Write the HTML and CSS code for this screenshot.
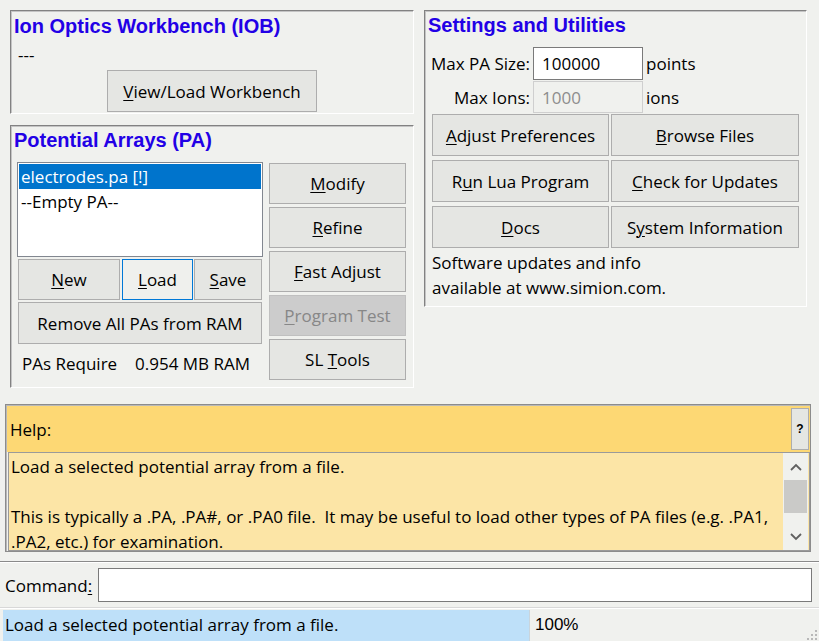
FILE: index.html
```html
<!DOCTYPE html>
<html>
<head>
<meta charset="utf-8">
<title>SIMION</title>
<link rel="stylesheet" href="styles.css">
</head>
<body>
<div class="app">
  <div class="top">
    <div class="left-col">
      <section class="panel iob">
        <h2 class="title">Ion Optics Workbench (IOB)</h2>
        <div class="iob-status">---</div>
        <div class="iob-actions"><button class="btn btn-wb"><span><u>V</u>iew/Load Workbench</span></button></div>
      </section>
      <section class="panel pa">
        <h2 class="title">Potential Arrays (PA)</h2>
        <div class="pa-body">
          <div class="pa-main">
            <ul class="listbox">
              <li class="sel">electrodes.pa [!]</li>
              <li>--Empty PA--</li>
            </ul>
            <div class="pa-row">
              <button class="btn b-new"><span><u>N</u>ew</span></button>
              <button class="btn b-load"><span><u>L</u>oad</span></button>
              <button class="btn b-save"><span><u>S</u>ave</span></button>
            </div>
            <button class="btn b-remove"><span>Remove All PAs from RAM</span></button>
            <div class="pa-req"><span class="req-label">PAs Require</span><span>0.954 MB RAM</span></div>
          </div>
          <div class="pa-side">
            <button class="btn side-btn"><span><u>M</u>odify</span></button>
            <button class="btn side-btn"><span><u>R</u>efine</span></button>
            <button class="btn side-btn"><span><u>F</u>ast Adjust</span></button>
            <button class="btn side-btn disabled"><span><u>P</u>rogram Test</span></button>
            <button class="btn side-btn"><span>SL <u>T</u>ools</span></button>
          </div>
        </div>
      </section>
    </div>
    <section class="panel settings">
      <h2 class="title">Settings and Utilities</h2>
      <div class="form">
        <label class="flabel">Max PA Size:</label>
        <div class="field">100000</div>
        <span class="unit">points</span>
        <label class="flabel">Max Ions:</label>
        <div class="field field-off">1000</div>
        <span class="unit">ions</span>
      </div>
      <div class="util-grid">
        <button class="btn"><span><u>A</u>djust Preferences</span></button>
        <button class="btn"><span><u>B</u>rowse Files</span></button>
        <button class="btn"><span>R<u>u</u>n Lua Program</span></button>
        <button class="btn"><span><u>C</u>heck for Updates</span></button>
        <button class="btn"><span><u>D</u>ocs</span></button>
        <button class="btn"><span>S<u>y</u>stem Information</span></button>
      </div>
      <div class="info">Software updates and info<br>available at www.simion.com.</div>
    </section>
  </div>

  <section class="help">
    <div class="help-head">
      <span class="help-label">Help:</span>
      <button class="qbtn">?</button>
    </div>
    <div class="help-body">
      <div class="help-text">
        <p>Load a selected potential array from a file.</p>
        <p class="gap">This is typically a .PA, .PA#, or .PA0 file.&nbsp; It may be useful to load other types of PA files (e.g. .PA1, .PA2, etc.) for examination.</p>
      </div>
      <div class="scrollbar">
        <div class="sb-arrow">
          <svg width="12" height="8" viewBox="0 0 12 8"><path d="M1 7 L6 2 L11 7" fill="none" stroke="#606060" stroke-width="1.8"/></svg>
        </div>
        <div class="sb-track"><div class="sb-thumb"></div></div>
        <div class="sb-arrow">
          <svg width="12" height="8" viewBox="0 0 12 8"><path d="M1 1 L6 6 L11 1" fill="none" stroke="#606060" stroke-width="1.8"/></svg>
        </div>
      </div>
    </div>
  </section>

  <div class="sep"></div>

  <div class="cmd">
    <label class="cmd-label">Command<u>:</u></label>
    <div class="cmd-input"></div>
  </div>

  <div class="sep2"></div>

  <div class="status">
    <div class="status-msg">Load a selected potential array from a file.</div>
    <div class="status-pct">100%</div>
    <svg class="grip" width="12" height="12" viewBox="0 0 12 12">
      <rect x="9" y="1" width="2" height="2" fill="#b8b8b8"/>
      <rect x="5" y="5" width="2" height="2" fill="#b8b8b8"/>
      <rect x="9" y="5" width="2" height="2" fill="#b8b8b8"/>
      <rect x="1" y="9" width="2" height="2" fill="#b8b8b8"/>
      <rect x="5" y="9" width="2" height="2" fill="#b8b8b8"/>
      <rect x="9" y="9" width="2" height="2" fill="#b8b8b8"/>
    </svg>
  </div>
</div>
</body>
</html>
```

FILE: styles.css
```css
* { box-sizing: border-box; }
html, body { margin: 0; padding: 0; }
body {
  width: 819px;
  height: 641px;
  overflow: hidden;
  background: #f0f1ee;
  font-family: "Open Sans", "Noto Sans", sans-serif;
  font-size: 17px;
  color: #000;
}
u { text-decoration-thickness: 1px; text-underline-offset: 2px; }

.app { display: flex; flex-direction: column; width: 819px; height: 641px; }

.top { display: flex; gap: 10px; padding: 10px 0 0 10px; align-items: flex-start; }
.left-col { display: flex; flex-direction: column; gap: 11px; width: 404px; }

.panel {
  border: 1px solid;
  border-color: #828282 #ffffff #ffffff #828282;
  box-shadow: inset 1px 1px 0 #c4c4c4;
  padding: 3px 3px 0;
}
.title {
  margin: 0;
  padding-top: 1px;
  font: bold 20px/22px "Liberation Sans", Arial, sans-serif;
  color: #2200e6;
  white-space: nowrap;
}

.btn {
  font: inherit;
  font-size: 17px;
  line-height: 22px;
  color: #000;
  background: #e5e6e3;
  border: 1px solid #adadad;
  margin: 0;
  padding: 1px 0 0;
  display: flex;
  align-items: center;
  justify-content: center;
  white-space: nowrap;
}

/* IOB */
.iob { height: 104px; padding-top: 3px; }
.iob-status { margin: 6px 0 0 4px; line-height: 24px; }
.iob-actions { display: flex; justify-content: center; margin-top: 3px; }
.btn-wb { width: 210px; height: 42px; }

/* PA */
.pa { height: 263px; padding-top: 2px; }
.pa-body { display: flex; gap: 6px; margin-top: 11px; padding-left: 3px; }
.pa-main { width: 246px; display: flex; flex-direction: column; }
.listbox {
  list-style: none;
  margin: 0;
  padding: 1px;
  height: 95px;
  background: #fff;
  border: 1px solid #828790;
}
.listbox li { height: 25px; line-height: 25px; padding-left: 2px; }
.listbox li.sel { background: #0074cc; color: #fff; }
.pa-row { display: flex; margin: 2px 0 0 1px; }
.b-new { width: 102px; height: 41px; }
.b-load { width: 71px; height: 41px; margin-left: 2px; background: #eff0ed; border-color: #0078d7; }
.b-save { width: 68px; height: 41px; margin-left: 1px; }
.b-remove { width: 244px; height: 42px; margin: 2px 0 0 1px; }
.pa-req { margin-top: 7px; padding-left: 5px; line-height: 25px; display: flex; }
.req-label { width: 113px; }
.pa-side { width: 137px; display: flex; flex-direction: column; gap: 3px; margin-top: 1px; }
.side-btn { height: 41px; }
.btn.disabled { background: #cccccc; border-color: #c0c0c0; color: #878787; }

/* Settings */
.settings { width: 383px; height: 297px; padding-top: 2px; }
.form {
  display: grid;
  grid-template-columns: 102px 110px auto;
  grid-template-rows: 33px 32px;
  column-gap: 3px;
  row-gap: 1px;
  margin-top: 11px;
}
.flabel { align-self: center; text-align: right; white-space: nowrap; }
.unit { align-self: center; }
.field {
  border: 1px solid #7a7a7a;
  background: #fff;
  padding-left: 8px;
  display: flex;
  align-items: center;
}
.field-off { border-color: #cfcfcf; background: #f0f1ee; color: #8d8d8d; }
.util-grid {
  display: grid;
  grid-template-columns: 177px 188px;
  grid-auto-rows: 42px;
  gap: 4px 2px;
  margin: 1px 0 0 4px;
}
.info { margin-top: 2px; padding-left: 4px; line-height: 25px; }

/* Help */
.help {
  margin: 16px 0 0 5px;
  width: 806px;
  height: 148px;
  border: 1px solid #8c8c8c;
  box-shadow: inset 1px 1px 0 #b8b8b8;
  display: flex;
  flex-direction: column;
  padding: 1px 0 0 1px;
}
.help-head {
  height: 46px;
  background: #fdd874;
  display: flex;
  align-items: center;
  justify-content: space-between;
  padding-left: 3px;
}
.qbtn {
  width: 18px;
  height: 42px;
  padding: 0;
  margin: 0 1px 0 0;
  background: #e5e6e3;
  border: 1px solid #adadad;
  font: bold 12px "Liberation Sans", Arial, sans-serif;
  color: #000;
}
.help-body {
  flex: 1;
  margin-left: 1px;
  border: 1px solid #9a9a9a;
  background: #fce5a6;
  display: flex;
  overflow: hidden;
  padding-right: 1px;
}
.help-text { flex: 1; padding: 1px 0 0 2px; line-height: 25px; overflow: hidden; }
.help-text p { margin: 0; }
.help-text p.gap { margin-top: 25px; }
.scrollbar { width: 25px; background: #f0f1ee; display: flex; flex-direction: column; }
.sb-arrow { height: 27px; display: flex; align-items: center; justify-content: center; }
.sb-track { flex: 1; }
.sb-thumb { height: 33px; background: #cacac8; margin: 0 1px; }

/* Command */
.sep { margin-top: 9px; height: 2px; border-top: 1px solid #8a8a8a; border-bottom: 1px solid #ffffff; }
.cmd { display: flex; align-items: center; margin-top: 5px; height: 34px; }
.cmd-label { width: 98px; padding-left: 5px; }
.cmd-input { width: 714px; height: 34px; border: 1px solid #7a7a7a; background: #fff; }
.sep2 { margin-top: 5px; height: 2px; border-top: 1px solid #d8d8d8; border-bottom: 1px solid #ffffff; }

/* Status */
.status { display: flex; align-items: stretch; height: 31px; margin-top: 1px; }
.status-msg {
  width: 527px;
  margin-left: 3px;
  background: #bee0f9;
  border-right: 1px solid #c9d4dc;
  padding-left: 2px;
  line-height: 30px;
}
.status-pct {
  flex: 1;
  padding-left: 5px;
  font: 17px/30px "Liberation Sans", Arial, sans-serif;
}
.grip { align-self: flex-end; margin: 0 1px 0 0; }
```
